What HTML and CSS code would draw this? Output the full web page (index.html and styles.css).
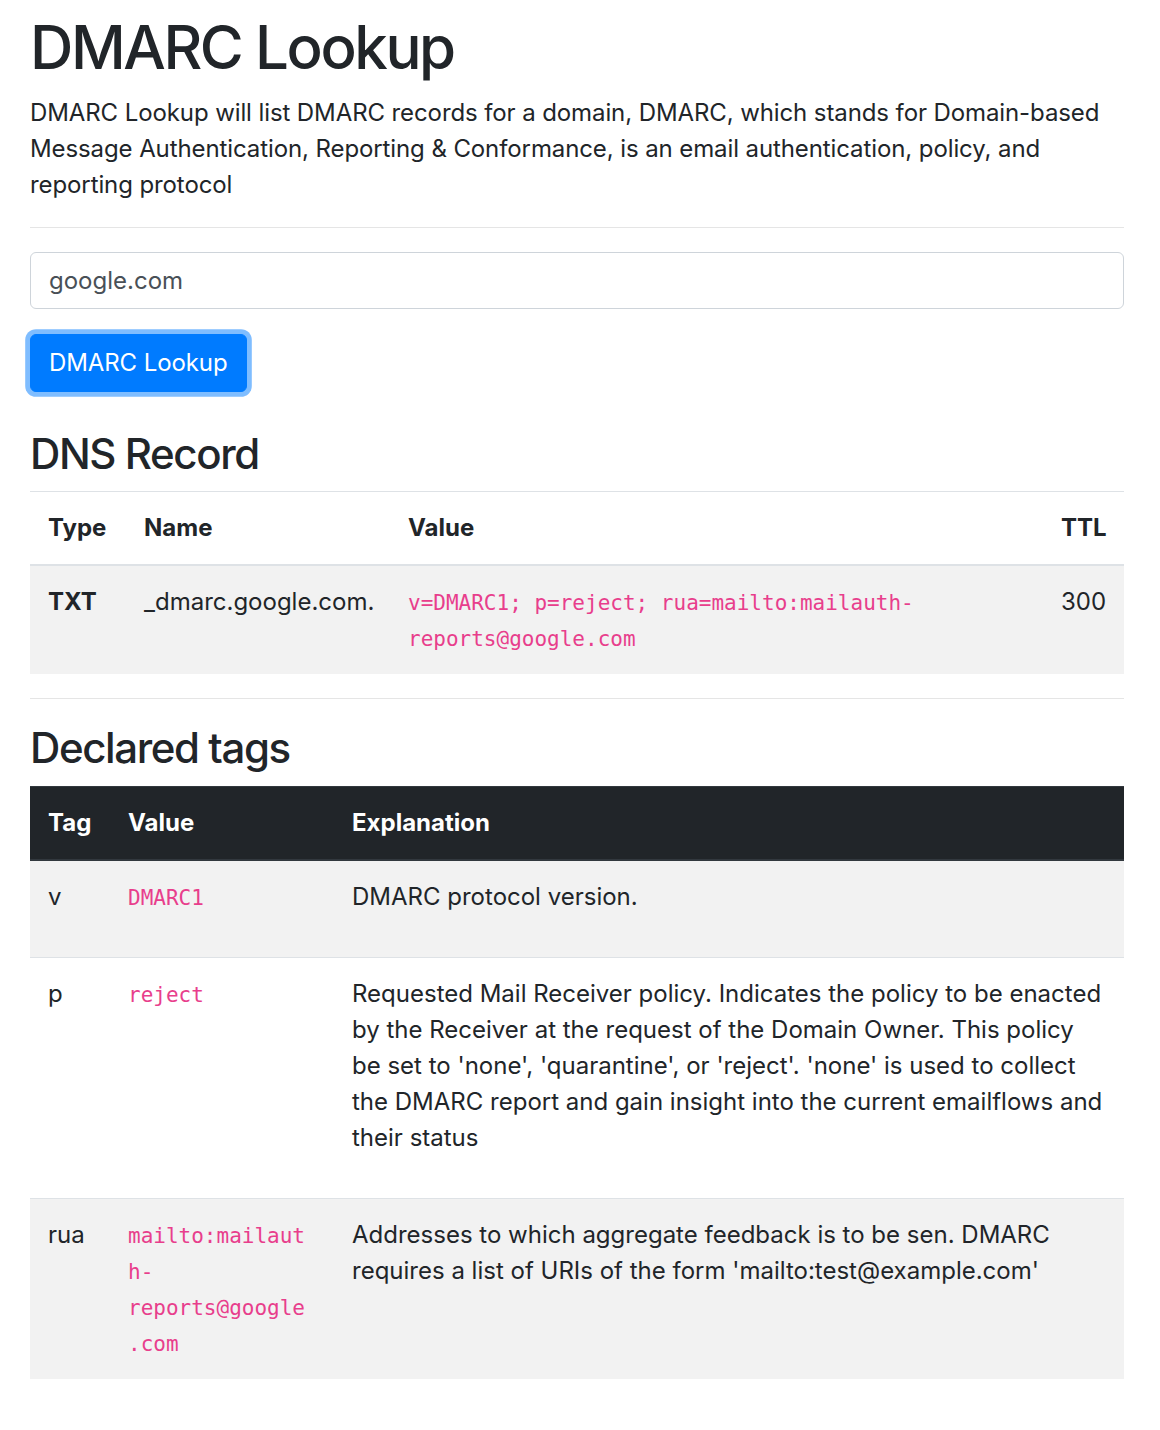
FILE: index.html
```html
<!DOCTYPE html>
<html lang="en">
<head>
<meta charset="utf-8">
<title>DMARC Lookup</title>
<link rel="stylesheet" href="styles.css">
</head>
<body>
<div class="container">
  <h1 class="title">DMARC Lookup</h1>
  <p class="lead-text">DMARC Lookup will list DMARC records for a domain, DMARC, which stands for Domain-based Message Authentication, Reporting &amp; Conformance, is an email authentication, policy, and reporting protocol</p>
  <hr class="rule">
  <form class="lookup-form">
    <div class="form-group">
      <input class="form-control" type="text" value="google.com">
    </div>
    <button class="btn-primary" type="button">DMARC Lookup</button>
  </form>

  <h3 class="section-title">DNS Record</h3>
  <table class="table striped record-table">
    <colgroup>
      <col class="c-type"><col class="c-name"><col class="c-value"><col class="c-ttl">
    </colgroup>
    <thead>
      <tr><th>Type</th><th>Name</th><th>Value</th><th>TTL</th></tr>
    </thead>
    <tbody>
      <tr>
        <td class="bold">TXT</td>
        <td>_dmarc.google.com.</td>
        <td><code>v=DMARC1; p=reject; rua=mailto:mailauth-reports@google.com</code></td>
        <td>300</td>
      </tr>
    </tbody>
  </table>
  <hr class="rule">

  <h3 class="section-title">Declared tags</h3>
  <table class="table striped tags-table">
    <colgroup>
      <col class="c-tag"><col class="c-tval"><col class="c-expl">
    </colgroup>
    <thead class="thead-dark">
      <tr><th>Tag</th><th>Value</th><th>Explanation</th></tr>
    </thead>
    <tbody>
      <tr>
        <td>v</td>
        <td><code>DMARC1</code></td>
        <td><p class="expl">DMARC protocol version.</p></td>
      </tr>
      <tr>
        <td>p</td>
        <td><code>reject</code></td>
        <td><p class="expl">Requested Mail Receiver policy. Indicates the policy to be enacted by the Receiver at the request of the Domain Owner. This policy be set to 'none', 'quarantine', or 'reject'. 'none' is used to collect the DMARC report and gain insight into the current emailflows and their status</p></td>
      </tr>
      <tr>
        <td>rua</td>
        <td><code>mailto:mailauth-reports@google.com</code></td>
        <td><p class="expl">Addresses to which aggregate feedback is to be sen. DMARC requires a list of URIs of the form 'mailto:test@example.com'</p></td>
      </tr>
    </tbody>
  </table>
</div>
</body>
</html>
```

FILE: styles.css
```css
html, body {
  margin: 0;
  padding: 0;
  background: #fff;
}
body {
  font-family: Inter, "Noto Sans", "Liberation Sans", sans-serif;
  font-size: 24px;
  line-height: 1.5;
  color: #212529;
}
.container {
  width: 1094px;
  padding: 11px 36px 0 30px;
}
.title {
  font-size: 60px;
  font-weight: 500;
  line-height: 1.2;
  letter-spacing: -2.4px;
  margin: 0 0 12px;
}
.lead-text {
  margin: 0 0 24px;
  letter-spacing: -0.1px;
}
.rule {
  border: 0;
  border-top: 1px solid rgba(0, 0, 0, 0.1);
  margin: 24px 0;
  height: 0;
}
.lookup-form {
  margin: 0 0 37px;
}
.form-group {
  margin-bottom: 25px;
}
.form-control {
  display: block;
  box-sizing: border-box;
  width: 100%;
  height: 57px;
  padding: 9px 18px;
  font-family: inherit;
  font-size: 24px;
  line-height: 1.5;
  color: #495057;
  background: #fff;
  border: 1px solid #ced4da;
  border-radius: 6px;
  margin: 0;
}
.btn-primary {
  display: inline-block;
  font-family: inherit;
  font-size: 24px;
  line-height: 1.5;
  font-weight: 400;
  padding: 10px 18px;
  color: #fff;
  background: #007bff;
  border: 1px solid #007bff;
  border-radius: 6px;
  box-shadow: 0 0 0 4.8px rgba(0, 123, 255, 0.5);
  margin: 0;
  letter-spacing: -0.1px;
}
.section-title {
  font-size: 42px;
  font-weight: 500;
  line-height: 1.2;
  letter-spacing: -1.4px;
  margin: 0 0 12px;
}
.table {
  width: 100%;
  border-collapse: collapse;
  table-layout: fixed;
  margin-bottom: 24px;
}
.table th,
.table td {
  padding: 18px;
  vertical-align: top;
  border-top: 1px solid #dee2e6;
  text-align: left;
}
.table th {
  font-weight: 700;
}
.table thead th {
  vertical-align: bottom;
  border-bottom: 2px solid #dee2e6;
}
.striped tbody tr:nth-of-type(odd) {
  background-color: rgba(0, 0, 0, 0.05);
}
.thead-dark th {
  color: #fff;
  background-color: #212529;
}
.table .thead-dark th {
  border-color: #32383e;
}
.bold {
  font-weight: 700;
}
code {
  font-family: "DejaVu Sans Mono", "Liberation Mono", monospace;
  font-size: 21px;
  color: #e83e8c;
  overflow-wrap: break-word;
  word-wrap: break-word;
}
.expl {
  margin: 0 0 24px;
}
.c-type { width: 96px; }
.c-name { width: 264px; }
.c-ttl { width: 81px; }
.c-tag { width: 80px; }
.c-tval { width: 224px; }
```
